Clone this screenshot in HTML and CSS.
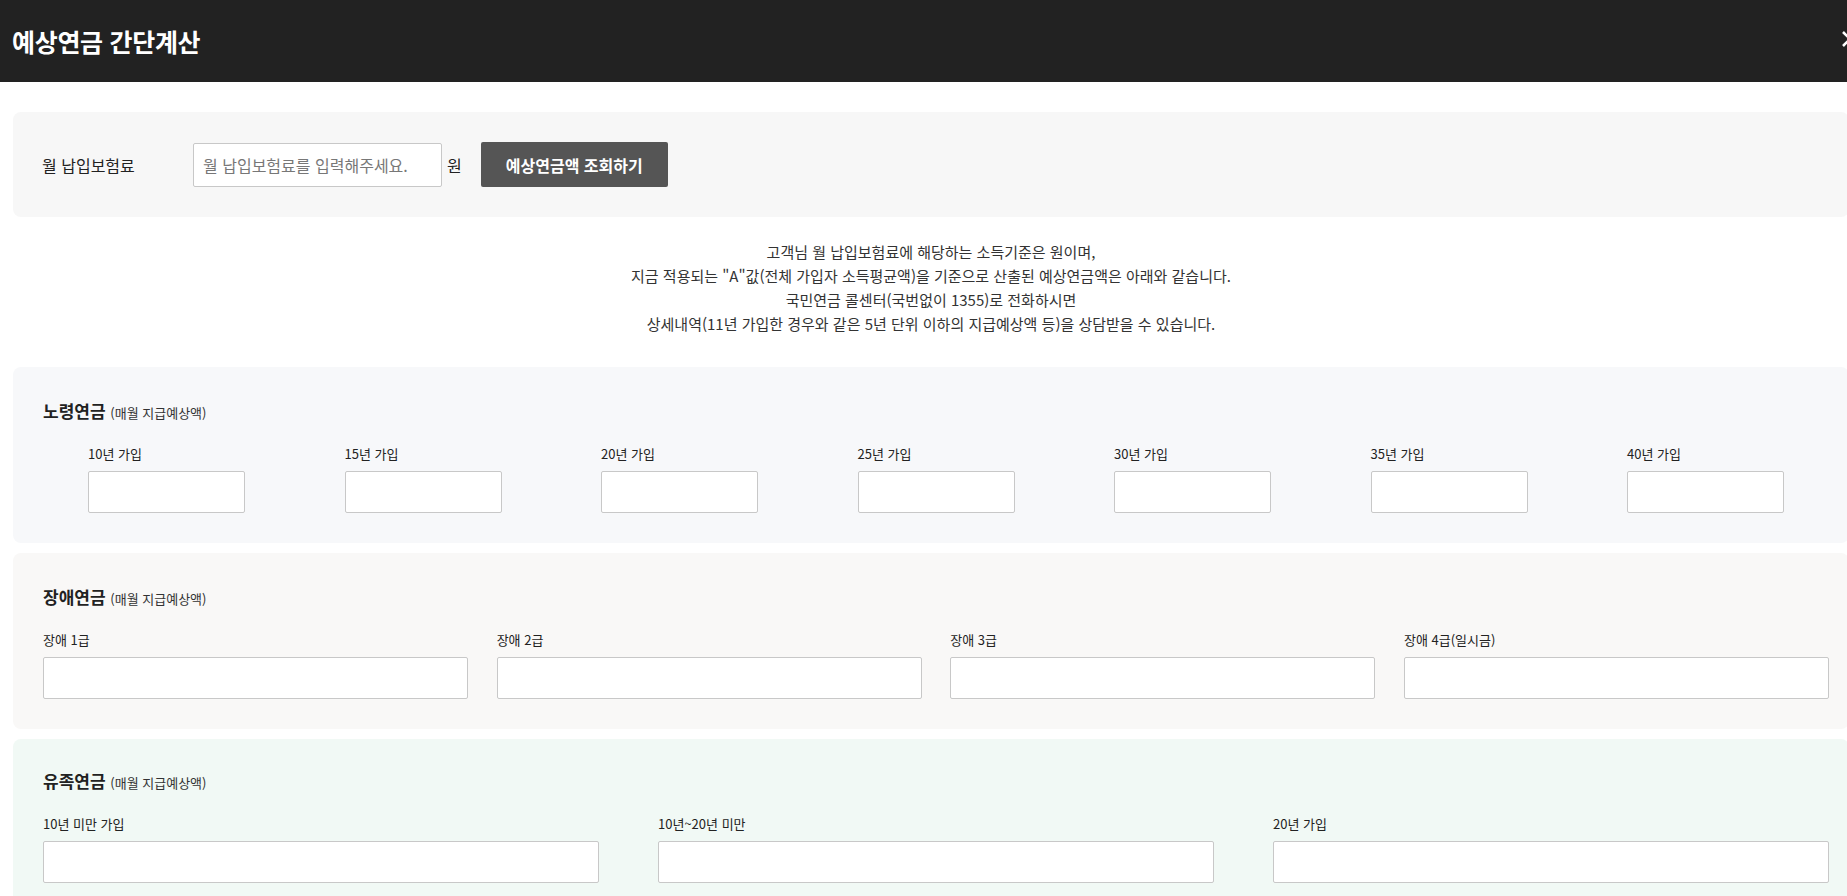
FILE: index.html
```html
<!DOCTYPE html>
<html lang="ko">

<head>
    <meta charset="utf-8">
    <title>예상연금 간단계산</title>
    <link rel="stylesheet" href="styles.css">
</head>

<body>
    <div class="popup">
        <div class="popup-header">
            <h1 class="popup-title">예상연금 간단계산</h1>
            <button type="button" class="btn-close" aria-label="닫기">
                <svg width="20" height="20" viewBox="0 0 20 20">
                    <path d="M3 3 L17 17 M17 3 L3 17" stroke="#fff" stroke-width="2.6" fill="none" />
                </svg>
            </button>
        </div>

        <div class="popup-body">
            <div class="search-box">
                <label class="search-label" for="premium">월 납입보험료</label>
                <input type="text" id="premium" class="search-input" placeholder="월 납입보험료를 입력해주세요.">
                <span class="unit">원</span>
                <button type="button" class="btn-search">예상연금액 조회하기</button>
            </div>

            <p class="guide-text">
                고객님 월 납입보험료에 해당하는 소득기준은 원이며,<br>
                지금 적용되는 "A"값(전체 가입자 소득평균액)을 기준으로 산출된 예상연금액은 아래와 같습니다.<br>
                국민연금 콜센터(국번없이 1355)로 전화하시면<br>
                상세내역(11년 가입한 경우와 같은 5년 단위 이하의 지급예상액 등)을 상담받을 수 있습니다.
            </p>

            <!-- 노령연금 -->
            <div class="result-box old-age">
                <h2 class="result-title">노령연금 <span>(매월 지급예상액)</span></h2>
                <div class="field-row cols-7">
                    <div class="field"><label>10년 가입</label><input type="text" readonly></div>
                    <div class="field"><label>15년 가입</label><input type="text" readonly></div>
                    <div class="field"><label>20년 가입</label><input type="text" readonly></div>
                    <div class="field"><label>25년 가입</label><input type="text" readonly></div>
                    <div class="field"><label>30년 가입</label><input type="text" readonly></div>
                    <div class="field"><label>35년 가입</label><input type="text" readonly></div>
                    <div class="field"><label>40년 가입</label><input type="text" readonly></div>
                </div>
            </div>

            <!-- 장애연금 -->
            <div class="result-box disability">
                <h2 class="result-title">장애연금 <span>(매월 지급예상액)</span></h2>
                <div class="field-row cols-4">
                    <div class="field"><label>장애 1급</label><input type="text" readonly></div>
                    <div class="field"><label>장애 2급</label><input type="text" readonly></div>
                    <div class="field"><label>장애 3급</label><input type="text" readonly></div>
                    <div class="field"><label>장애 4급(일시금)</label><input type="text" readonly></div>
                </div>
            </div>

            <!-- 유족연금 -->
            <div class="result-box survivor">
                <h2 class="result-title">유족연금 <span>(매월 지급예상액)</span></h2>
                <div class="field-row cols-3">
                    <div class="field"><label>10년 미만 가입</label><input type="text" readonly></div>
                    <div class="field"><label>10년~20년 미만</label><input type="text" readonly></div>
                    <div class="field"><label>20년 가입</label><input type="text" readonly></div>
                </div>
            </div>
        </div>
    </div>
</body>

</html>
```

FILE: styles.css
```css
html,
body {
    margin: 0;
    padding: 0;
    overflow: hidden;
    background-color: #fff;
}

body {
    font-family: "Noto Sans CJK KR", "Noto Sans", sans-serif;
    color: #222;
}

.popup {
    width: 1862px;
}

.popup-header {
    display: flex;
    align-items: center;
    justify-content: space-between;
    height: 82px;
    padding: 0 2px 0 12px;
    background-color: #222;
}

.popup-title {
    margin: 0;
    font-size: 25px;
    font-weight: 700;
    letter-spacing: -0.3px;
    color: #fff;
}

.btn-close {
    display: flex;
    padding: 0;
    border: 0;
    background: none;
    margin-top: -4px;
}

.popup-body {
    padding: 30px 13px 0;
}

/* 조회 영역 */
.search-box {
    display: flex;
    align-items: center;
    height: 105px;
    padding: 0 29px;
    background-color: #f7f7f7;
    border-radius: 8px;
    box-sizing: border-box;
}

.search-label {
    width: 151px;
    font-size: 16px;
    color: #222;
}

.search-input {
    width: 249px;
    height: 44px;
    padding: 0 9px;
    box-sizing: border-box;
    border: 1px solid #c8c8c8;
    border-radius: 2px;
    font-family: inherit;
    font-size: 16px;
    color: #222;
}

.search-input::placeholder {
    color: #777;
}

.unit {
    margin: 0 19px 0 5px;
    font-size: 16px;
}

.btn-search {
    width: 187px;
    height: 45px;
    border: 0;
    border-radius: 2px;
    background-color: #555;
    color: #fff;
    font-family: inherit;
    font-size: 16px;
    font-weight: 700;
}

.guide-text {
    margin: 0;
    padding: 23px 0 31px;
    text-align: center;
    font-size: 15px;
    line-height: 24px;
    color: #333;
}

/* 결과 영역 */
.result-box {
    padding: 32px 20px 30px 30px;
    margin-bottom: 10px;
    border-radius: 8px;
}

.old-age {
    background-color: #f7f8fa;
}

.disability {
    background-color: #f9f8f7;
}

.survivor {
    padding-top: 30px;
    background-color: #f1f9f5;
}

.result-title {
    margin: 0 0 19px;
    font-size: 17px;
    font-weight: 700;
    line-height: 24px;
}

.result-title span {
    font-size: 13px;
    font-weight: 400;
    color: #333;
}

.field-row {
    display: grid;
    justify-content: space-between;
}

.cols-7 {
    grid-template-columns: repeat(7, 157px);
    padding: 0 45px;
}

.cols-4 {
    grid-template-columns: repeat(4, 425px);
}

.cols-3 {
    grid-template-columns: repeat(3, 556px);
}

.field label {
    display: block;
    margin-bottom: 7px;
    font-size: 13px;
    line-height: 20px;
    color: #222;
}

.field input {
    display: block;
    width: 100%;
    height: 42px;
    box-sizing: border-box;
    border: 1px solid #c8c8c8;
    border-radius: 2px;
    background-color: #fff;
}
```
